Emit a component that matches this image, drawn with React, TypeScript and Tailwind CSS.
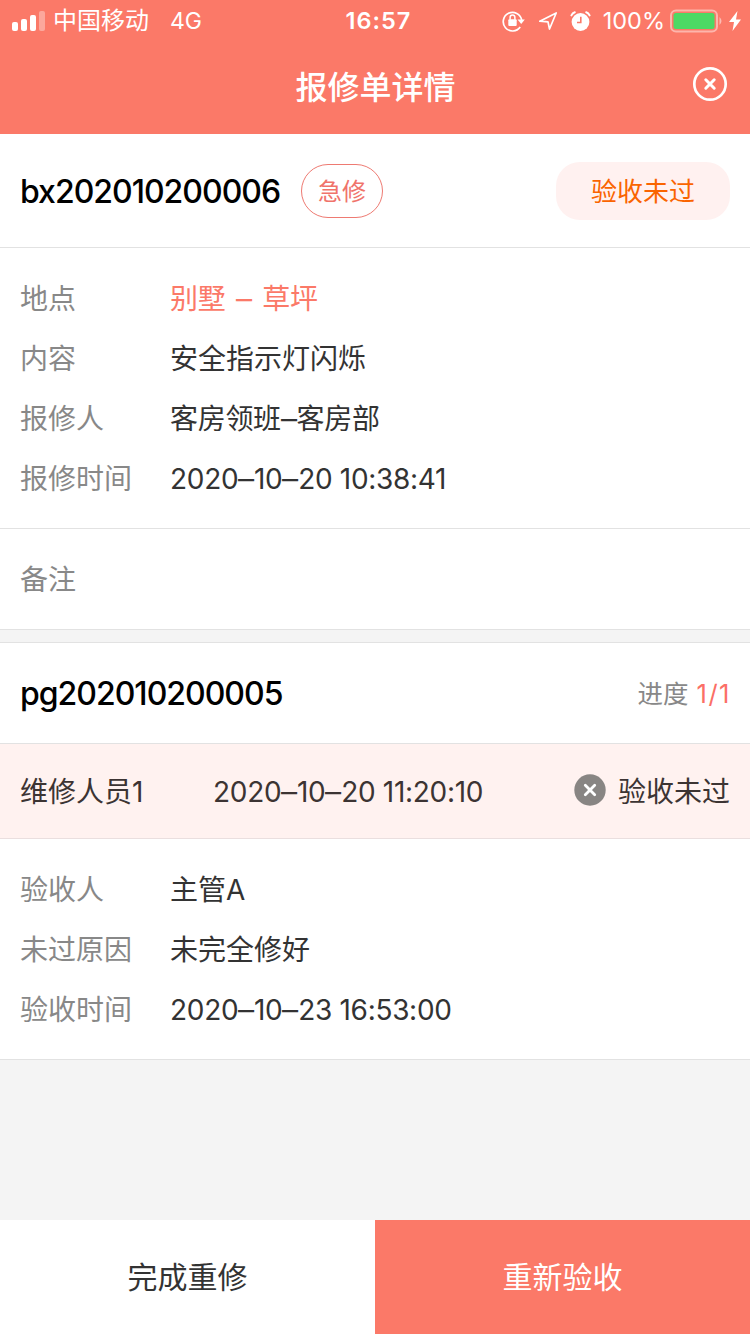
import { Fragment } from "react";

type Detail = {
  label: string;
  value: string;
  accent?: boolean;
};

const repairDetails: Detail[] = [
  { label: "地点", value: "别墅 – 草坪", accent: true },
  { label: "内容", value: "安全指示灯闪烁" },
  { label: "报修人", value: "客房领班–客房部" },
  { label: "报修时间", value: "2020–10–20 10:38:41" },
];

const checkDetails: Detail[] = [
  { label: "验收人", value: "主管A" },
  { label: "未过原因", value: "未完全修好" },
  { label: "验收时间", value: "2020–10–23 16:53:00" },
];

function StatusBar() {
  return (
    <div className="flex h-10 items-center text-white">
      <div className="flex flex-1 items-center pl-3">
        <svg width="34" height="20" viewBox="0 0 34 20" fill="currentColor">
          <rect x="0" y="11" width="6" height="9" rx="2" />
          <rect x="9" y="8" width="6" height="12" rx="2" />
          <rect x="18" y="4" width="6" height="16" rx="2" />
          <rect x="27" y="0" width="6" height="20" rx="2" opacity="0.35" />
        </svg>
        <span className="ml-[7px] text-2xl leading-10">中国移动</span>
        <span className="ml-[21px] text-[23px] leading-10">4G</span>
      </div>
      <span className="pl-1 text-[23.5px] leading-10 font-semibold tracking-[1px]">
        16:57
      </span>
      <div className="flex flex-1 items-center justify-end pr-[9px]">
        {/* rotation lock */}
        <svg width="23" height="22" viewBox="0 0 23 22" fill="none">
          <path
            d="M18.2 17A9.3 9.3 0 1 1 19.7 10"
            stroke="currentColor"
            strokeWidth="1.7"
          />
          <path d="M15.5 9.5h7.3L19.2 14z" fill="currentColor" />
          <rect x="6.3" y="9.3" width="8.4" height="6.7" rx="1" fill="currentColor" />
          <path
            d="M8.1 9.8V7.5a2.4 2.4 0 0 1 4.8 0v2.3"
            stroke="currentColor"
            strokeWidth="1.5"
          />
        </svg>
        {/* location */}
        <svg
          className="ml-[13px]"
          width="20"
          height="20"
          viewBox="0 0 20 20"
          fill="none"
        >
          <path
            d="M1.8 10.2 18.2 2 11.5 18 10 10.8z"
            stroke="currentColor"
            strokeWidth="1.7"
            strokeLinejoin="round"
          />
        </svg>
        {/* alarm */}
        <svg
          className="ml-3"
          width="21"
          height="21"
          viewBox="0 0 21 21"
          fill="none"
        >
          <circle cx="10.5" cy="11" r="8.9" fill="currentColor" />
          <path
            d="M1.4 4.4Q2.6 2 4.8 1.3M19.6 4.4Q18.4 2 16.2 1.3"
            stroke="currentColor"
            strokeWidth="2"
            strokeLinecap="round"
          />
          <path d="M10.8 5.8v5.7H7" stroke="#fb7968" strokeWidth="1.6" />
        </svg>
        <span className="ml-3 text-[23.5px] leading-10">100%</span>
        <svg
          className="ml-[5px]"
          width="53"
          height="24"
          viewBox="0 0 53 24"
          fill="none"
        >
          <rect
            x="1"
            y="1.5"
            width="46"
            height="21"
            rx="5"
            stroke="white"
            strokeWidth="2"
            opacity="0.45"
          />
          <rect x="3.5" y="4" width="41" height="16" rx="2.5" fill="#4cd964" />
          <path d="M49.5 8q4 4 0 8z" fill="white" opacity="0.5" />
        </svg>
        <svg
          className="ml-1.5"
          width="12"
          height="20"
          viewBox="0 0 12 20"
          fill="currentColor"
        >
          <path d="M8.5 0 0 11h5L3.5 20 12 8.5H7z" />
        </svg>
      </div>
    </div>
  );
}

// Dashes are drawn a little wider than the font's own
function Dashed({ text }: { text: string }) {
  return (
    <span className="tracking-[-0.3px] whitespace-pre">
      {text.split("–").map((part, i) => (
        <Fragment key={i}>
          {i > 0 && <span className="mx-px inline-block scale-x-115">–</span>}
          {part}
        </Fragment>
      ))}
    </span>
  );
}

function DetailList({ items }: { items: Detail[] }) {
  return (
    <dl className="border-b border-[#e2e2e2] bg-white px-5 py-5">
      {items.map((item) => (
        <div key={item.label} className="flex h-15 items-center pt-0.5">
          <dt className="w-[150px] text-[#888888]">{item.label}</dt>
          <dd
            className={
              item.accent
                ? "text-[#fb7968] [word-spacing:3px]"
                : "text-[#333333]"
            }
          >
            {item.value.includes("–") ? (
              <Dashed text={item.value} />
            ) : (
              item.value
            )}
          </dd>
        </div>
      ))}
    </dl>
  );
}

export default function App() {
  return (
    <div className="flex h-[1334px] w-[750px] flex-col bg-[#f4f4f4] font-['Inter','Noto_Sans_CJK_SC',sans-serif] text-[28px] leading-10">
      <header className="h-[134px] bg-[#fb7968] pt-px">
        <StatusBar />
        <div className="flex h-[93px] items-center justify-between px-[23px] text-white">
          <span className="w-9" />
          <h1 className="text-[32px] font-medium">报修单详情</h1>
          <button type="button" className="-mt-2 -mr-px">
            <svg
              width="36"
              height="36"
              viewBox="0 0 36 36"
              fill="none"
              stroke="currentColor"
            >
              <circle cx="18" cy="18" r="15.7" strokeWidth="2.7" />
              <path
                d="m13.8 13.8 8.4 8.4m0-8.4-8.4 8.4"
                strokeWidth="3"
                strokeLinecap="round"
              />
            </svg>
          </button>
        </div>
      </header>

      <section className="flex h-[114px] items-center border-b border-[#e2e2e2] bg-white px-5">
        <h2 className="pt-0.5 text-[32px] font-medium tracking-[-1px] text-black">
          bx202010200006
        </h2>
        <span className="ml-[21px] flex h-[54px] w-[82px] items-center justify-center rounded-full border border-[#ee7a72] pt-0.5 text-2xl text-[#f0736b]">
          急修
        </span>
        <span className="ml-auto flex h-[58px] w-[174px] items-center justify-center rounded-[24px] bg-[#fff1f0] pt-0.5 text-[26px] text-[#fa6400]">
          验收未过
        </span>
      </section>

      <DetailList items={repairDetails} />

      <section className="flex h-[101px] items-center border-b border-[#e2e2e2] bg-white px-5 pt-0.5 text-[#888888]">
        备注
      </section>

      <section className="mt-3 flex h-[102px] items-center justify-between border-y border-[#e2e2e2] bg-white px-5 pt-0.5">
        <h2 className="text-[32px] font-medium tracking-[-1px] text-black">
          pg202010200005
        </h2>
        <div className="flex gap-2 text-[25.5px] text-[#888888]">
          <span>进度</span>
          <span className="-mr-px tracking-[1.5px] text-[#fb6f66]">1/1</span>
        </div>
      </section>

      <section className="flex h-[95px] items-center border-b border-[#eadfdf] bg-[#fff2f0] px-5 pt-0.5 text-[#3c3433]">
        <span className="w-[193px]">维修人员1</span>
        <Dashed text="2020–10–20 11:20:10" />
        <span className="ml-auto flex items-center gap-3">
          <svg className="-mt-1" width="32" height="32" viewBox="0 0 32 32">
            <circle cx="16" cy="16" r="15.7" fill="#888583" />
            <path
              d="m11.3 11.3 9.4 9.4m0-9.4-9.4 9.4"
              stroke="white"
              strokeWidth="2.8"
              strokeLinecap="round"
            />
          </svg>
          验收未过
        </span>
      </section>

      <DetailList items={checkDetails} />

      <footer className="mt-auto flex h-[114px] text-[30px]">
        <button type="button" className="flex-1 bg-white text-[#333333]">
          完成重修
        </button>
        <button type="button" className="flex-1 bg-[#fb7968] text-white">
          重新验收
        </button>
      </footer>
    </div>
  );
}
